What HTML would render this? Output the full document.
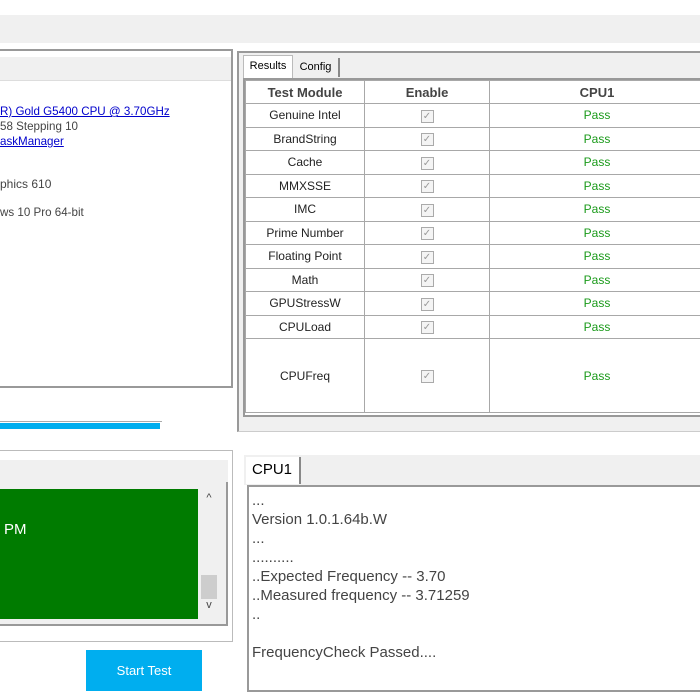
<!DOCTYPE html>
<html><head><style>
body{margin:0;width:700px;height:700px;overflow:hidden;background:#fff;font-family:"Liberation Sans",sans-serif;position:relative}
.a{position:absolute}
table{border-collapse:collapse;font-size:12px;color:#222}
td{border:1px solid #a8a8a8;text-align:center;padding:0}
.p{color:#1a9a1a}
.cb{display:inline-block;width:11px;height:11px;border:1px solid #aaa;background:#f4f4f4;color:#999;font-size:10px;line-height:11px}
</style></head><body>
<div class="a" style="left:0;top:15px;width:700px;height:28px;background:#f0f0f0"></div>
<div class="a" style="left:0;top:49px;width:231px;height:335px;border-top:2px solid #999;border-right:2px solid #999;border-bottom:2px solid #999;background:#fff"></div>
<div class="a" style="left:0;top:57px;width:231px;height:23px;background:#f0f0f0;border-bottom:1px solid #ddd"></div>
<div class="a" style="left:0;top:104px;font-size:11.6px;line-height:15px;color:#444;white-space:nowrap">
<span style="color:#00c;text-decoration:underline">R) Gold G5400 CPU @ 3.70GHz</span><br>58 Stepping 10<br><span style="color:#00c;text-decoration:underline">askManager</span></div>
<div class="a" style="left:0;top:177px;font-size:12px;color:#444">phics 610</div>
<div class="a" style="left:0;top:206px;font-size:11.6px;color:#444">ws 10 Pro 64-bit</div>
<div class="a" style="left:0;top:421px;width:162px;height:1px;background:#aaa"></div>
<div class="a" style="left:0;top:423px;width:160px;height:6px;background:#00aeef"></div>
<div class="a" style="left:237px;top:51px;width:463px;height:378px;border-left:2px solid #999;border-top:2px solid #999;border-bottom:1px solid #ccc;background:#f0f0f0"></div>
<div class="a" style="left:243px;top:55px;width:48px;height:22px;background:#fff;border:1px solid #bbb;border-bottom:none;font-size:11px;line-height:20px;text-align:center">Results</div>
<div class="a" style="left:293px;top:58px;width:45px;height:19px;border-right:2px solid #888;font-size:11px;line-height:19px;text-align:center">Config</div>
<div class="a" style="left:243px;top:78px;width:460px;height:335px;border:2px solid #999;border-right:none;background:#fff">
<table style="width:460px">
<tr style="height:23px;font-weight:bold;font-size:13px;color:#444"><td style="width:118px">Test Module</td><td style="width:124px">Enable</td><td>CPU1</td></tr>
<tr style="height:23.5px"><td>Genuine Intel</td><td><span class="cb">✓</span></td><td class="p">Pass</td></tr>
<tr style="height:23.5px"><td>BrandString</td><td><span class="cb">✓</span></td><td class="p">Pass</td></tr>
<tr style="height:23.5px"><td>Cache</td><td><span class="cb">✓</span></td><td class="p">Pass</td></tr>
<tr style="height:23.5px"><td>MMXSSE</td><td><span class="cb">✓</span></td><td class="p">Pass</td></tr>
<tr style="height:23.5px"><td>IMC</td><td><span class="cb">✓</span></td><td class="p">Pass</td></tr>
<tr style="height:23.5px"><td>Prime Number</td><td><span class="cb">✓</span></td><td class="p">Pass</td></tr>
<tr style="height:23.5px"><td>Floating Point</td><td><span class="cb">✓</span></td><td class="p">Pass</td></tr>
<tr style="height:23.5px"><td>Math</td><td><span class="cb">✓</span></td><td class="p">Pass</td></tr>
<tr style="height:23.5px"><td>GPUStressW</td><td><span class="cb">✓</span></td><td class="p">Pass</td></tr>
<tr style="height:23.5px"><td>CPULoad</td><td><span class="cb">✓</span></td><td class="p">Pass</td></tr>
<tr style="height:74px"><td>CPUFreq</td><td><span class="cb">✓</span></td><td class="p">Pass</td></tr>
</table></div>
<div class="a" style="left:0;top:450px;width:232px;height:190px;border:1px solid #bbb;border-left:none;background:#fff"></div>
<div class="a" style="left:0;top:460px;width:228px;height:22px;background:#f0f0f0"></div>
<div class="a" style="left:0;top:482px;width:226px;height:142px;background:#f0f0f0;border-bottom:2px solid #999;border-right:2px solid #999"></div>
<div class="a" style="left:0;top:489px;width:198px;height:130px;background:#007b00;color:#fff;font-size:15px"><div style="position:absolute;left:4px;top:32px">PM</div></div>
<div class="a" style="left:200px;top:489px;width:18px;height:130px;background:#f0f0f0;font-size:11px;color:#444;text-align:center"><div style="margin-top:3px">^</div><div style="position:absolute;top:86px;left:1px;width:16px;height:24px;background:#cdcdcd"></div><div style="position:absolute;top:110px;left:0;width:18px">v</div></div>
<div class="a" style="left:86px;top:650px;width:116px;height:41px;background:#00aeef;color:#fff;font-size:13px;line-height:41px;text-align:center">Start Test</div>
<div class="a" style="left:244px;top:455px;width:456px;height:30px;background:#f0f0f0"></div>
<div class="a" style="left:246px;top:457px;width:53px;height:27px;background:#fff;border-right:2px solid #888;font-size:15px;line-height:26px;text-indent:6px">CPU1</div>
<div class="a" style="left:247px;top:485px;width:453px;height:203px;border:2px solid #999;border-right:none;background:#fff;font-size:15px;line-height:19px;color:#444">
<div style="padding:4px 0 0 3px">...<br>Version 1.0.1.64b.W<br>...<br>..........<br>..Expected Frequency -- 3.70<br>..Measured frequency -- 3.71259<br>..<br><br>FrequencyCheck Passed....</div></div>
</body></html>
